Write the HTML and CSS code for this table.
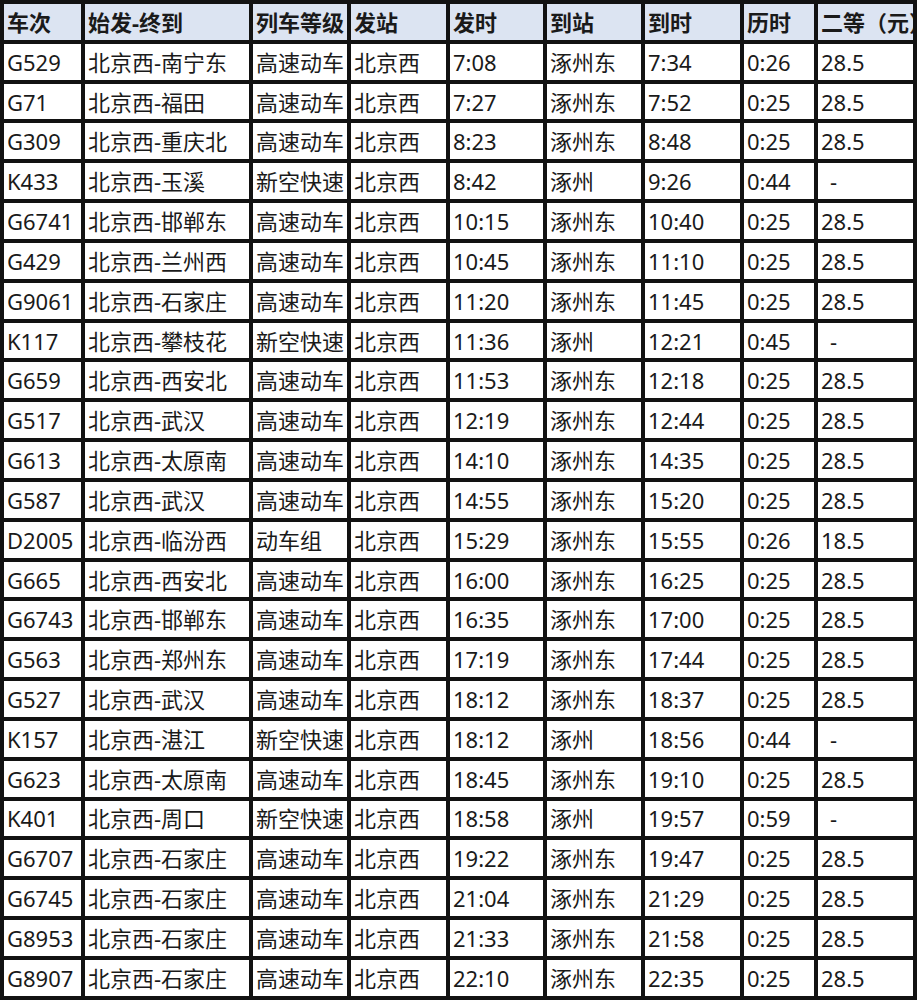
FILE: index.html
```html
<!DOCTYPE html>
<html lang="zh-CN">
<head>
<meta charset="utf-8">
<title>北京西-涿州 列车时刻表</title>
<link rel="stylesheet" href="styles.css">
</head>
<body>
<div class="timetable">
  <div class="cell head">车次</div><div class="cell head">始发-终到</div><div class="cell head">列车等级</div><div class="cell head">发站</div><div class="cell head">发时</div><div class="cell head">到站</div><div class="cell head">到时</div><div class="cell head">历时</div><div class="cell head">二等（元）</div>

  <div class="cell">G529</div><div class="cell">北京西-南宁东</div><div class="cell">高速动车</div><div class="cell">北京西</div><div class="cell">7:08</div><div class="cell">涿州东</div><div class="cell">7:34</div><div class="cell">0:26</div><div class="cell">28.5</div>
  <div class="cell">G71</div><div class="cell">北京西-福田</div><div class="cell">高速动车</div><div class="cell">北京西</div><div class="cell">7:27</div><div class="cell">涿州东</div><div class="cell">7:52</div><div class="cell">0:25</div><div class="cell">28.5</div>
  <div class="cell">G309</div><div class="cell">北京西-重庆北</div><div class="cell">高速动车</div><div class="cell">北京西</div><div class="cell">8:23</div><div class="cell">涿州东</div><div class="cell">8:48</div><div class="cell">0:25</div><div class="cell">28.5</div>
  <div class="cell">K433</div><div class="cell">北京西-玉溪</div><div class="cell">新空快速</div><div class="cell">北京西</div><div class="cell">8:42</div><div class="cell">涿州</div><div class="cell">9:26</div><div class="cell">0:44</div><div class="cell dash">-</div>
  <div class="cell">G6741</div><div class="cell">北京西-邯郸东</div><div class="cell">高速动车</div><div class="cell">北京西</div><div class="cell">10:15</div><div class="cell">涿州东</div><div class="cell">10:40</div><div class="cell">0:25</div><div class="cell">28.5</div>
  <div class="cell">G429</div><div class="cell">北京西-兰州西</div><div class="cell">高速动车</div><div class="cell">北京西</div><div class="cell">10:45</div><div class="cell">涿州东</div><div class="cell">11:10</div><div class="cell">0:25</div><div class="cell">28.5</div>
  <div class="cell">G9061</div><div class="cell">北京西-石家庄</div><div class="cell">高速动车</div><div class="cell">北京西</div><div class="cell">11:20</div><div class="cell">涿州东</div><div class="cell">11:45</div><div class="cell">0:25</div><div class="cell">28.5</div>
  <div class="cell">K117</div><div class="cell">北京西-攀枝花</div><div class="cell">新空快速</div><div class="cell">北京西</div><div class="cell">11:36</div><div class="cell">涿州</div><div class="cell">12:21</div><div class="cell">0:45</div><div class="cell dash">-</div>
  <div class="cell">G659</div><div class="cell">北京西-西安北</div><div class="cell">高速动车</div><div class="cell">北京西</div><div class="cell">11:53</div><div class="cell">涿州东</div><div class="cell">12:18</div><div class="cell">0:25</div><div class="cell">28.5</div>
  <div class="cell">G517</div><div class="cell">北京西-武汉</div><div class="cell">高速动车</div><div class="cell">北京西</div><div class="cell">12:19</div><div class="cell">涿州东</div><div class="cell">12:44</div><div class="cell">0:25</div><div class="cell">28.5</div>
  <div class="cell">G613</div><div class="cell">北京西-太原南</div><div class="cell">高速动车</div><div class="cell">北京西</div><div class="cell">14:10</div><div class="cell">涿州东</div><div class="cell">14:35</div><div class="cell">0:25</div><div class="cell">28.5</div>
  <div class="cell">G587</div><div class="cell">北京西-武汉</div><div class="cell">高速动车</div><div class="cell">北京西</div><div class="cell">14:55</div><div class="cell">涿州东</div><div class="cell">15:20</div><div class="cell">0:25</div><div class="cell">28.5</div>
  <div class="cell">D2005</div><div class="cell">北京西-临汾西</div><div class="cell">动车组</div><div class="cell">北京西</div><div class="cell">15:29</div><div class="cell">涿州东</div><div class="cell">15:55</div><div class="cell">0:26</div><div class="cell">18.5</div>
  <div class="cell">G665</div><div class="cell">北京西-西安北</div><div class="cell">高速动车</div><div class="cell">北京西</div><div class="cell">16:00</div><div class="cell">涿州东</div><div class="cell">16:25</div><div class="cell">0:25</div><div class="cell">28.5</div>
  <div class="cell">G6743</div><div class="cell">北京西-邯郸东</div><div class="cell">高速动车</div><div class="cell">北京西</div><div class="cell">16:35</div><div class="cell">涿州东</div><div class="cell">17:00</div><div class="cell">0:25</div><div class="cell">28.5</div>
  <div class="cell">G563</div><div class="cell">北京西-郑州东</div><div class="cell">高速动车</div><div class="cell">北京西</div><div class="cell">17:19</div><div class="cell">涿州东</div><div class="cell">17:44</div><div class="cell">0:25</div><div class="cell">28.5</div>
  <div class="cell">G527</div><div class="cell">北京西-武汉</div><div class="cell">高速动车</div><div class="cell">北京西</div><div class="cell">18:12</div><div class="cell">涿州东</div><div class="cell">18:37</div><div class="cell">0:25</div><div class="cell">28.5</div>
  <div class="cell">K157</div><div class="cell">北京西-湛江</div><div class="cell">新空快速</div><div class="cell">北京西</div><div class="cell">18:12</div><div class="cell">涿州</div><div class="cell">18:56</div><div class="cell">0:44</div><div class="cell dash">-</div>
  <div class="cell">G623</div><div class="cell">北京西-太原南</div><div class="cell">高速动车</div><div class="cell">北京西</div><div class="cell">18:45</div><div class="cell">涿州东</div><div class="cell">19:10</div><div class="cell">0:25</div><div class="cell">28.5</div>
  <div class="cell">K401</div><div class="cell">北京西-周口</div><div class="cell">新空快速</div><div class="cell">北京西</div><div class="cell">18:58</div><div class="cell">涿州</div><div class="cell">19:57</div><div class="cell">0:59</div><div class="cell dash">-</div>
  <div class="cell">G6707</div><div class="cell">北京西-石家庄</div><div class="cell">高速动车</div><div class="cell">北京西</div><div class="cell">19:22</div><div class="cell">涿州东</div><div class="cell">19:47</div><div class="cell">0:25</div><div class="cell">28.5</div>
  <div class="cell">G6745</div><div class="cell">北京西-石家庄</div><div class="cell">高速动车</div><div class="cell">北京西</div><div class="cell">21:04</div><div class="cell">涿州东</div><div class="cell">21:29</div><div class="cell">0:25</div><div class="cell">28.5</div>
  <div class="cell">G8953</div><div class="cell">北京西-石家庄</div><div class="cell">高速动车</div><div class="cell">北京西</div><div class="cell">21:33</div><div class="cell">涿州东</div><div class="cell">21:58</div><div class="cell">0:25</div><div class="cell">28.5</div>
  <div class="cell">G8907</div><div class="cell">北京西-石家庄</div><div class="cell">高速动车</div><div class="cell">北京西</div><div class="cell">22:10</div><div class="cell">涿州东</div><div class="cell">22:35</div><div class="cell">0:25</div><div class="cell">28.5</div>
</div>
</body>
</html>
```
FILE: styles.css
```css
html, body {
  margin: 0;
  padding: 0;
  background: #ffffff;
}

.timetable {
  box-sizing: border-box;
  width: 917px;
  height: 1000px;
  display: grid;
  grid-template-columns: 77px 164px 94px 95px 93px 94px 95px 70px 95px;
  grid-auto-rows: 35.84px;
  gap: 4px;
  padding: 4px;
  background: #121212;
  overflow: hidden;
}

.cell {
  display: flex;
  align-items: center;
  padding-left: 3px;
  background: #ffffff;
  color: #1a1a1a;
  font-family: "Noto Sans", "Noto Sans CJK SC", sans-serif;
  font-size: 22px;
  line-height: 1;
  white-space: nowrap;
  overflow: hidden;
}

.head {
  background: #dce4f2;
  font-weight: 700;
}

.dash {
  padding-left: 12px;
}
```
